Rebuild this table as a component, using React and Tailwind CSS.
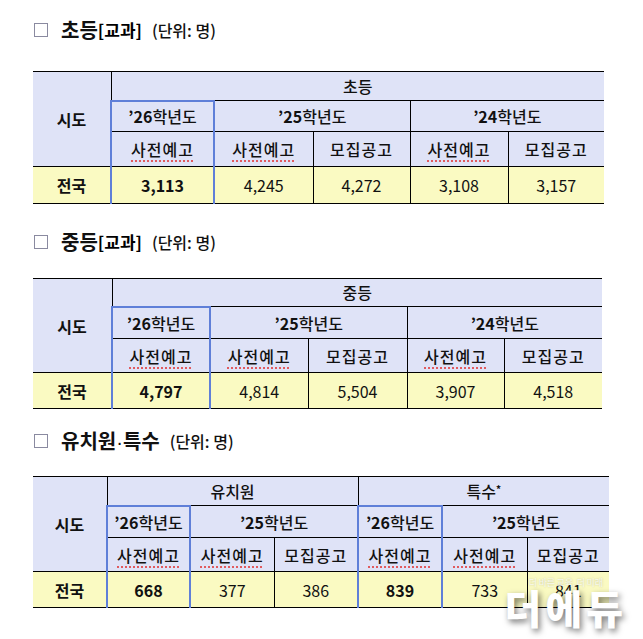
import React from 'react';

const hd = 'bg-[#dfe3f7]';
const yl = 'bg-[#fafac2]';
const bk = 'border border-black';
// blue frame around the '26 column
const blTop = 'border-x-2 border-t-2 border-b border-x-[#5f7fd8] border-t-[#5f7fd8] border-b-black';
const blMid = 'border-x-2 border-y border-x-[#5f7fd8] border-y-black';

const Sp = ({ children }) => (
    <span className="underline decoration-dotted decoration-[#e03a3a] underline-offset-[5px] tracking-[1px]">{children}</span>
);

const Year = ({ y }) => (
    <span><b className="font-bold">’{y}</b>학년도</span>
);

const Heading = ({ title, sub, className }) => (
    <div className={`flex items-center h-6 ml-px ${className}`}>
        <div className="w-[14px] h-[14px] border border-[#8a8aa0]" />
        <span className="ml-[13px] text-[20px] font-bold text-[#111]">{title}</span>
        {sub}
        <span className="ml-[10px] text-[16px] font-medium text-[#111]">(단위: 명)</span>
    </div>
);

const Subject = () => (
    <span className="text-[17px] font-bold">[교과]</span>
);

const td = 'text-center p-0 text-[16px] text-[#111]';
const h = `${td} ${hd} font-medium`;
const n = `${td} ${yl} font-normal`;
const nb = `${td} ${yl} font-bold`;

const ThreeYear = ({ widths, heights, level, nums }) => (
    <table className="border-collapse table-fixed" style={{ width: widths.reduce((a, b) => a + b, 0) }}>
        <colgroup>
            {widths.map((w, i) => <col key={i} style={{ width: w }} />)}
        </colgroup>
        <tbody>
            <tr style={{ height: heights[0] }}>
                <td rowSpan={3} className={`${td} ${hd} font-semibold ${bk} border-l-0`}>시도</td>
                <td colSpan={5} className={`${h} ${bk} border-r-0`}>{level}</td>
            </tr>
            <tr style={{ height: heights[1] }}>
                <td className={`${h} ${blTop}`}><Year y="26" /></td>
                <td colSpan={2} className={`${h} ${bk}`}><Year y="25" /></td>
                <td colSpan={2} className={`${h} ${bk} border-r-0`}><Year y="24" /></td>
            </tr>
            <tr style={{ height: heights[2] }}>
                <td className={`${h} ${blMid}`}><Sp>사전예고</Sp></td>
                <td className={`${h} ${bk}`}><Sp>사전예고</Sp></td>
                <td className={`${h} ${bk} tracking-[1px]`}>모집공고</td>
                <td className={`${h} ${bk}`}><Sp>사전예고</Sp></td>
                <td className={`${h} ${bk} border-r-0 tracking-[1px]`}>모집공고</td>
            </tr>
            <tr style={{ height: heights[3] }}>
                <td className={`${td} ${yl} font-semibold ${bk} border-l-0`}>전국</td>
                <td className={`${nb} ${blMid}`}>{nums[0]}</td>
                <td className={`${n} ${bk}`}>{nums[1]}</td>
                <td className={`${n} ${bk}`}>{nums[2]}</td>
                <td className={`${n} ${bk}`}>{nums[3]}</td>
                <td className={`${n} ${bk} border-r-0`}>{nums[4]}</td>
            </tr>
        </tbody>
    </table>
);

const KinderSpecial = () => {
    const widths = [74, 83, 84, 84, 84, 85, 82];
    return (
        <table className="border-collapse table-fixed" style={{ width: 576 }}>
            <colgroup>
                {widths.map((w, i) => <col key={i} style={{ width: w }} />)}
            </colgroup>
            <tbody>
                <tr style={{ height: 29 }}>
                    <td rowSpan={3} className={`${td} ${hd} font-semibold ${bk} border-l-0`}>시도</td>
                    <td colSpan={3} className={`${h} ${bk}`}>유치원</td>
                    <td colSpan={3} className={`${h} ${bk} border-r-0`}>특수<sup className="text-[10px] font-bold">*</sup></td>
                </tr>
                <tr style={{ height: 32 }}>
                    <td className={`${h} ${blTop}`}><Year y="26" /></td>
                    <td colSpan={2} className={`${h} ${bk}`}><Year y="25" /></td>
                    <td className={`${h} ${blTop}`}><Year y="26" /></td>
                    <td colSpan={2} className={`${h} ${bk} border-r-0`}><Year y="25" /></td>
                </tr>
                <tr style={{ height: 34 }}>
                    <td className={`${h} ${blMid}`}><Sp>사전예고</Sp></td>
                    <td className={`${h} ${bk}`}><Sp>사전예고</Sp></td>
                    <td className={`${h} ${bk} tracking-[1px]`}>모집공고</td>
                    <td className={`${h} ${blMid}`}><Sp>사전예고</Sp></td>
                    <td className={`${h} ${bk}`}><Sp>사전예고</Sp></td>
                    <td className={`${h} ${bk} border-r-0 tracking-[1px]`}>모집공고</td>
                </tr>
                <tr style={{ height: 36 }}>
                    <td className={`${td} ${yl} font-semibold ${bk} border-l-0`}>전국</td>
                    <td className={`${nb} ${blMid}`}>668</td>
                    <td className={`${n} ${bk}`}>377</td>
                    <td className={`${n} ${bk}`}>386</td>
                    <td className={`${nb} ${blMid}`}>839</td>
                    <td className={`${n} ${bk}`}>733</td>
                    <td className={`${n} ${bk} border-r-0`}>841</td>
                </tr>
            </tbody>
        </table>
    );
};

export default function App() {
    return (
        <div className="relative w-[643px] h-[639px] bg-white overflow-hidden pl-[33px] pt-[18px] font-['Noto_Sans_CJK_KR','Noto_Sans',sans-serif]">
            <Heading title="초등" sub={<Subject />} />
            <div className="mt-[29px]">
                <ThreeYear
                    widths={[78, 103, 99, 97, 98, 96]}
                    heights={[29, 31, 35, 37]}
                    level="초등"
                    nums={['3,113', '4,245', '4,272', '3,108', '3,157']}
                />
            </div>

            <Heading title="중등" sub={<Subject />} className="mt-[26px]" />
            <div className="mt-[24px]">
                <ThreeYear
                    widths={[79, 98, 98, 99, 97, 98]}
                    heights={[28, 32, 34, 36]}
                    level="중등"
                    nums={['4,797', '4,814', '5,504', '3,907', '4,518']}
                />
            </div>

            <Heading
                title={<>유치원<span className="font-['Liberation_Sans',sans-serif] font-normal">·</span>특수</>}
                sub={null}
                className="mt-[20px]"
            />
            <div className="mt-[23px]">
                <KinderSpecial />
            </div>

            {/* watermark */}
            <div className="absolute right-[16px] bottom-[14px] flex flex-col items-center pointer-events-none">
                <span className="text-[9px] text-white/80 tracking-tight [text-shadow:0_0_2px_rgba(0,0,0,0.25)]">더 바른 교육, 더 미래</span>
                <span className="text-[40px] leading-[36px] font-black text-white tracking-[4px] [text-shadow:2px_3px_6px_rgba(0,0,0,0.55)]">더에듀</span>
            </div>
        </div>
    );
}
